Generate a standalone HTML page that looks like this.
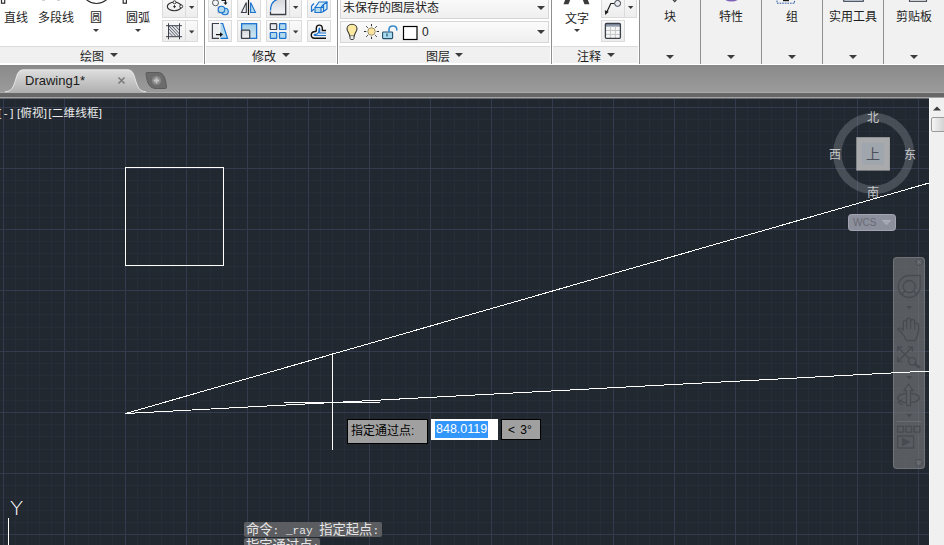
<!DOCTYPE html>
<html lang="zh-CN">
<head>
<meta charset="utf-8">
<title>Drawing1</title>
<style>
html,body{margin:0;padding:0;}
body{width:944px;height:545px;overflow:hidden;position:relative;background:#212830;
  font-family:"Liberation Sans","Noto Sans CJK SC",sans-serif;font-size:12px;color:#1e1e1e;}
.abs{position:absolute;}
/* ---------- ribbon ---------- */
#ribbon{position:absolute;left:0;top:0;width:944px;height:65px;background:#fff;}
.ptitle{position:absolute;top:46px;height:16px;background:#f0f0f0;border-top:1px solid #dcdcdc;}
.vsep{position:absolute;top:0;width:1px;height:64px;background:#8f8f8f;}
.lbl{position:absolute;font-size:12px;line-height:14px;white-space:nowrap;color:#1e1e1e;}
.tri{position:absolute;width:0;height:0;border-left:4px solid transparent;border-right:4px solid transparent;border-top:4px solid #3c3c3c;}
.tris{position:absolute;width:0;height:0;border-left:3px solid transparent;border-right:3px solid transparent;border-top:3px solid #3c3c3c;}
.btn{position:absolute;box-sizing:border-box;border:1px solid #dbdbdb;background:linear-gradient(#fafafa,#ededed);}
.btn.r1{top:-6px;height:24px;}
.btn.r2{top:20px;height:22px;}
.btn i{position:absolute;top:0;bottom:0;width:1px;background:#dbdbdb;}
.btn svg{position:absolute;left:0;top:0;}
.combo{position:absolute;left:340px;width:209px;box-sizing:border-box;border:1px solid #d6d6d6;background:linear-gradient(#fbfbfb,#efefef);}
/* ---------- tab bar ---------- */
#tabbar{position:absolute;left:0;top:65px;width:944px;height:33px;
  background:linear-gradient(#888888 0px,#8c8c8c 3px,#9b9b9b 27px,#a9a9a9 27px,#a9a9a9 28px,#696969 28px,#666666 32px,#a3a3a3 32px,#a3a3a3 33px);}
/* ---------- canvas ---------- */
#canvas{position:absolute;left:0;top:98px;width:929px;height:447px;background-color:#212830;overflow:hidden;}
#vscroll{position:absolute;left:929px;top:98px;width:15px;height:447px;background:#f0f0f0;}
.vp{position:absolute;color:#ececec;font-size:11.6px;line-height:14px;white-space:nowrap;letter-spacing:0.15px;}
.tip{position:absolute;box-sizing:border-box;border:1px solid #000;background:#a0a0a0;color:#000;font-size:12px;line-height:14px;white-space:nowrap;}
.cmp{width:14px;text-align:center;font-size:12px;line-height:14px;color:#c4c6c8;}
.cmd{position:absolute;background:#5b5d60;color:#e6e6e6;border-radius:2px;overflow:visible;}
.ct{position:absolute;left:2px;top:1px;white-space:nowrap;font-family:"Liberation Mono","Noto Sans CJK SC",monospace;font-size:11.1px;line-height:16px;}
.ct b{font-weight:normal;font-size:13.3px;}
</style>
</head>
<body>
<div id="ribbon">
  <!-- collapsed panels background -->
  <div class="abs" style="left:640px;top:0;width:304px;height:64px;background:#f1f1f1;"></div>
  <!-- panel title strips -->
  <div class="ptitle" style="left:0;width:203px;"></div>
  <div class="ptitle" style="left:206px;width:130px;"></div>
  <div class="ptitle" style="left:339px;width:211px;"></div>
  <div class="ptitle" style="left:553px;width:85px;"></div>
  <!-- separators -->
  <div class="vsep" style="left:204px;"></div>
  <div class="vsep" style="left:337px;"></div>
  <div class="vsep" style="left:551px;"></div>
  <div class="vsep" style="left:639px;"></div>
  <div class="vsep" style="left:700px;"></div>
  <div class="vsep" style="left:761px;"></div>
  <div class="vsep" style="left:822px;"></div>
  <div class="vsep" style="left:883px;"></div>


  <!-- big icon remnants at top edge -->
  <svg class="abs" style="left:0;top:0" width="160" height="8" viewBox="0 0 160 8" fill="none">
    <rect x="1.5" y="-2" width="3.2" height="5.200" fill="#fff" stroke="#2e2e2e" stroke-width="1.200"/>
    <circle cx="96.500" cy="-11.500" r="15" stroke="#2e2e2e" stroke-width="1.200"/>
    <rect x="123.200" y="-2" width="3.200" height="5.200" fill="#fff" stroke="#2e2e2e" stroke-width="1.200"/>
    <path d="M42 0.300H45M57 0.300H60" stroke="#c8c8c8" stroke-width="1"/>
  </svg>
  <!-- ellipse / hatch split buttons -->
  <div class="btn r1" style="left:162px;width:36px;"><i style="left:22px"></i>
    <svg width="34" height="22" viewBox="163 -5 34 22" fill="none">
      <ellipse cx="174.300" cy="6.500" rx="7" ry="4.200" stroke="#2e2e2e" stroke-width="1.100"/>
      <circle cx="174.500" cy="2.300" r="1.500" fill="#fff" stroke="#2e2e2e" stroke-width="1"/>
      <circle cx="181.200" cy="6.400" r="1.500" fill="#fff" stroke="#2e2e2e" stroke-width="1"/>
      <path d="M173 6.600H176M174.500 5.100V8.100" stroke="#2e2e2e" stroke-width="0.900"/>
      <path d="M189 6H194.400L191.700 9Z" fill="#3a3a3a"/>
    </svg></div>
  <div class="btn r2" style="left:162px;width:36px;"><i style="left:22px"></i>
    <svg width="34" height="20" viewBox="163 21 34 20" fill="none">
      <rect x="168.500" y="25.700" width="11" height="11" fill="#e2e4e8"/>
      <path d="M169 29L176 36.500M169 26L179 36.500M172 26L179.500 34M175.500 26L179.500 30.500M169 32.500L173 36.500" stroke="#3b404a" stroke-width="0.800"/>
      <path d="M166 25.700H182M166 36.700H182M168.500 23.300V39.300M179.500 23.300V39.300" stroke="#3b404a" stroke-width="1"/>
      <path d="M189 30.500H194.400L191.700 33.500Z" fill="#3a3a3a"/>
    </svg></div>
  <!-- DRAW panel -->
  <div class="lbl" style="left:4px;top:11px;">直线</div>
  <div class="lbl" style="left:38px;top:11px;">多段线</div>
  <div class="lbl" style="left:90px;top:11px;">圆</div>
  <div class="lbl" style="left:126px;top:11px;">圆弧</div>
  <div class="tris" style="left:93px;top:29px;"></div>
  <div class="tris" style="left:135px;top:29px;"></div>
  <div class="lbl" style="left:80px;top:50px;">绘图</div>
  <div class="tri" style="left:110px;top:53px;"></div>


  <!-- copy -->
  <div class="btn r1" style="left:208px;width:24px;">
    <svg width="22" height="22" viewBox="209 -5 22 22" fill="none">
      <rect x="217.500" y="6" width="6" height="7.500" fill="#c6c6c6"/>
      <circle cx="215.500" cy="2.800" r="3" fill="#f4f4f6" stroke="#50545c" stroke-width="1"/>
      <path d="M221.500 0.500H225.500V3" stroke="#1e1e1e" stroke-width="1.200"/><path d="M223.500 2.500H227.500L225.500 5Z" fill="#1e1e1e"/>
      <circle cx="225" cy="11.500" r="3.300" fill="#b3d9ec" stroke="#1b73cf" stroke-width="1.100"/>
      <circle cx="221.500" cy="9.500" r="3.300" fill="#b3d9ec" stroke="#1b73cf" stroke-width="1.100"/>
    </svg></div>
  <!-- stretch -->
  <div class="btn r2" style="left:208px;width:24px;">
    <svg width="22" height="20" viewBox="209 21 22 20" fill="none">
      <path d="M220.500 23.500H222.700L227.500 38.300H220.500Z" fill="#b3d9ec"/>
      <path d="M220.500 23.500H222.700L227.500 38.300H220.500" stroke="#1b73cf" stroke-width="1.200"/>
      <path d="M219 23.500H212.400V38.300H219" stroke="#3b404a" stroke-width="1.200" fill="#eceef0"/>
      <path d="M216 34.600H221" stroke="#111" stroke-width="1.200"/><path d="M220 32.300L223 34.600L220 36.900Z" fill="#111"/>
    </svg></div>
  <!-- mirror -->
  <div class="btn r1" style="left:237px;width:24px;">
    <svg width="22" height="22" viewBox="238 -5 22 22" fill="none">
      <path d="M246.300 2.500V12.500H241.500Z" fill="#f0f0f2" stroke="#3b404a" stroke-width="1.100"/>
      <path d="M250.600 2.500V12.500H255.500Z" fill="#b3d9ec" stroke="#1b73cf" stroke-width="1.100"/>
      <path d="M248.500 -5V15" stroke="#111" stroke-width="1.200"/>
    </svg></div>
  <!-- scale -->
  <div class="btn r2" style="left:237px;width:24px;">
    <svg width="22" height="20" viewBox="238 21 22 20" fill="none">
      <defs><linearGradient id="gb1" x1="0" y1="0" x2="0" y2="1"><stop offset="0" stop-color="#a3d0e6"/><stop offset="1" stop-color="#d2e8f3"/></linearGradient>
      <linearGradient id="gg1" x1="0" y1="0" x2="0" y2="1"><stop offset="0" stop-color="#d4d6da"/><stop offset="1" stop-color="#f4f4f6"/></linearGradient></defs>
      <rect x="241.600" y="23.700" width="15" height="14.600" fill="url(#gb1)" stroke="#1b73cf" stroke-width="1.300"/>
      <rect x="241.500" y="30.200" width="8.200" height="8.200" rx="0.800" fill="url(#gg1)" stroke="#3b404a" stroke-width="1.300"/>
    </svg></div>
  <!-- fillet -->
  <div class="btn r1" style="left:266px;width:36px;"><i style="left:22px"></i>
    <svg width="34" height="22" viewBox="267 -5 34 22" fill="none">
      <path d="M270.500 10.500C270.500 4 274 0 280 -1.500L285.700 -3V14.500H270.500Z" fill="url(#gg2)"/>
      <defs><linearGradient id="gg2" x1="0" y1="0" x2="0" y2="1"><stop offset="0" stop-color="#d0d2d6"/><stop offset="1" stop-color="#f6f6f8"/></linearGradient></defs>
      <path d="M270.500 11.500V14.500H285.700V-5" stroke="#3b404a" stroke-width="1.300"/>
      <path d="M270.500 10.500C270.500 4.500 273.500 0.500 278 -0.800" stroke="#1b73cf" stroke-width="1.300"/>
      <path d="M293 6H298.400L295.700 9Z" fill="#3a3a3a"/>
    </svg></div>
  <!-- array -->
  <div class="btn r2" style="left:266px;width:36px;"><i style="left:22px"></i>
    <svg width="34" height="20" viewBox="267 21 34 20" fill="none">
      <rect x="270.300" y="23.600" width="6.400" height="5.900" rx="0.600" fill="#e8e9ec" stroke="#3b404a" stroke-width="1.200"/>
      <rect x="279.500" y="23.600" width="6.400" height="5.900" rx="0.600" fill="#b3d9ec" stroke="#1b73cf" stroke-width="1.200"/>
      <rect x="270.300" y="32.500" width="6.400" height="5.900" rx="0.600" fill="#b3d9ec" stroke="#1b73cf" stroke-width="1.200"/>
      <rect x="279.500" y="32.500" width="6.400" height="5.900" rx="0.600" fill="#b3d9ec" stroke="#1b73cf" stroke-width="1.200"/>
      <path d="M293 30.500H298.400L295.700 33.500Z" fill="#3a3a3a"/>
    </svg></div>
  <!-- 3d box -->
  <div class="btn r1" style="left:307px;width:24px;">
    <svg width="22" height="22" viewBox="308 -5 22 22" fill="none" stroke="#1b73cf" stroke-width="1.200" stroke-linejoin="round">
      <path d="M315 7.500L319 2H327L323.500 7.500Z" fill="#d4eaf4"/>
      <path d="M315 7.500H321V12.500H315Z" fill="#b3d9ec"/>
      <path d="M323.500 4.500L327 2V9L323.500 11.500Z" fill="#d4eaf4"/>
      <path d="M311.500 6V11.500L314 9" /><path d="M311.500 6L314 3.500"/>
      <path d="M321 7.500L323.500 4.500M321 12.500L323.500 11.500"/>
    </svg></div>
  <!-- offset -->
  <div class="btn r2" style="left:307px;width:24px;">
    <svg width="22" height="20" viewBox="308 21 22 20" fill="none">
      <path d="M326 38.300H314.500C310 38.300 310 31.500 315.500 31.500C316.500 31.500 316.300 30 316.300 28.500C316.300 24 322.300 24 322.300 28.500V30.500H326" stroke="#111" stroke-width="1.400"/>
      <path d="M326 35.500H315.500C313.500 35.500 313.800 34.300 315.500 34.300C318.500 34.300 319 32 319 29.500C319 27.800 319.700 27.800 319.700 29.500V33H326" stroke="#1b73cf" stroke-width="1.200"/>
    </svg></div>
  <!-- MODIFY panel -->
  <div class="lbl" style="left:252px;top:50px;">修改</div>
  <div class="tri" style="left:282px;top:53px;"></div>


  <div class="combo" style="top:-4px;height:23px;"></div>
  <div class="combo" style="top:21px;height:22px;"></div>
  <div class="lbl" style="left:343px;top:1px;color:#222;">未保存的图层状态</div>
  <div class="tri" style="left:537px;top:6px;border-left-width:4.500px;border-right-width:4.500px;"></div>
  <div class="tri" style="left:537px;top:30px;border-left-width:4.500px;border-right-width:4.500px;"></div>
  <svg class="abs" style="left:342px;top:22px" width="90" height="20" viewBox="342 22 90 20" fill="none">
    <path d="M352 24.200C355 24.200 357 26.300 357 28.800C357 31.500 354.500 33 354.300 36H349.700C349.500 33 347 31.500 347 28.800C347 26.300 349 24.200 352 24.200Z" fill="#fbe9a0" stroke="#3a3a3a" stroke-width="1.100"/>
    <path d="M350 36V38.500C350 40 354 40 354 38.500V36" fill="#e8e8e8" stroke="#3a3a3a" stroke-width="1"/>
    <circle cx="371.500" cy="31.500" r="3.700" fill="#fbe5a0" stroke="#8a7a50" stroke-width="0.800"/>
    <path d="M371.500 24V26.300M371.500 36.700V39M364 31.500H366.300M376.700 31.500H379M366.200 26.200L367.800 27.800M375.200 35.200L376.800 36.800M376.800 26.200L375.200 27.800M367.800 35.200L366.200 36.800" stroke="#333" stroke-width="1"/>
    <rect x="382.600" y="32" width="10" height="6.600" rx="0.800" fill="#a9daef" stroke="#24506c" stroke-width="1.100"/>
    <path d="M387 33.500V36.500" stroke="#24506c" stroke-width="1.200"/>
    <path d="M389 32V29.500C389 24.800 396.800 24.800 396.800 29.500V30.500" stroke="#3a8acb" stroke-width="1.600"/>
    <rect x="403.500" y="26.500" width="13.500" height="13" fill="#fff" stroke="#000" stroke-width="1.200"/>
  </svg>
  <div class="lbl" style="left:422px;top:25px;color:#222;">0</div>
  <!-- LAYER panel -->
  <div class="lbl" style="left:426px;top:50px;">图层</div>
  <div class="tri" style="left:455px;top:53px;"></div>


  <svg class="abs" style="left:560px;top:0" width="34" height="6" viewBox="560 0 34 6">
    <path d="M563.500 4.200L565.500 -1H570.500L568.500 4.200Z" fill="#3a3a3a"/><path d="M589.500 4.200L587.500 -1H582.500L584.500 4.200Z" fill="#3a3a3a"/>
  </svg>
  <div class="btn r1" style="left:601px;width:36px;"><i style="left:22px"></i>
    <svg width="34" height="22" viewBox="602 -5 34 22" fill="none">
      <path d="M614.500 3.500H610.800L606.600 12.500" stroke="#1e1e1e" stroke-width="1.200"/>
      <path d="M604.800 10.200L605.200 15L608.800 11.800Z" fill="#1e1e1e"/>
      <circle cx="617.600" cy="3.400" r="3" fill="#e9eaee" stroke="#3a3f4a" stroke-width="1"/>
      <path d="M628 6H633.400L630.700 9Z" fill="#3a3a3a"/>
    </svg></div>
  <div class="btn r2" style="left:601px;width:24px;">
    <svg width="22" height="20" viewBox="602 21 22 20" fill="none">
      <rect x="605.400" y="23.500" width="15" height="14.800" rx="1" fill="#f6f6f6"/>
      <rect x="605.400" y="23.800" width="15" height="2.900" fill="#8f9aad"/>
      <path d="M605.400 30.500H620.400M605.400 34.400H620.400M610.400 26.500V38.300M615.400 26.500V38.300" stroke="#c4c6ca" stroke-width="1"/>
      <rect x="605.400" y="23.500" width="15" height="14.800" rx="1" stroke="#3b404a" stroke-width="1.300"/>
    </svg></div>
  <!-- ANNOTATE panel -->
  <div class="lbl" style="left:565px;top:12px;">文字</div>
  <div class="tris" style="left:574px;top:29px;"></div>
  <div class="lbl" style="left:577px;top:50px;">注释</div>
  <div class="tri" style="left:607px;top:53px;"></div>


  <svg class="abs" style="left:640px;top:0" width="304" height="6" viewBox="640 0 304 6" fill="none">
    <path d="M672.800 -0.500L674.700 1.600L676.600 -0.500" stroke="#3a3a3a" stroke-width="1.200"/>
    <ellipse cx="731.500" cy="-4" rx="8.800" ry="5.600" fill="#7b62b8"/>
    <path d="M777 -2V3.200H794.500V-2" stroke="#2a5aa8" stroke-width="1" stroke-dasharray="1.600 1"/>
    <rect x="783" y="-1" width="6" height="2.200" fill="#1a1a1a"/>
    <rect x="843.700" y="-3" width="19.600" height="4.300" fill="#dde3ea" stroke="#3a4050" stroke-width="1.100"/>
    <rect x="909.500" y="-3" width="17" height="4.300" fill="#fff" stroke="#3a3f48" stroke-width="1.100"/>
  </svg>
  <!-- collapsed panels -->
  <div class="lbl" style="left:664px;top:10px;">块</div>
  <div class="tri" style="left:666px;top:55px;"></div>
  <div class="lbl" style="left:719px;top:10px;">特性</div>
  <div class="tri" style="left:727px;top:55px;"></div>
  <div class="lbl" style="left:786px;top:10px;">组</div>
  <div class="tri" style="left:788px;top:55px;"></div>
  <div class="lbl" style="left:829px;top:10px;">实用工具</div>
  <div class="tri" style="left:849px;top:55px;"></div>
  <div class="lbl" style="left:896px;top:10px;">剪贴板</div>
  <div class="tri" style="left:910px;top:55px;"></div>
</div>

<div id="tabbar">
  <svg class="abs" style="left:0;top:0" width="200" height="33" viewBox="0 0 200 33">
    <defs><linearGradient id="tg" x1="0" y1="0" x2="0" y2="1"><stop offset="0" stop-color="#dedede"/><stop offset="1" stop-color="#aeaeae"/></linearGradient></defs>
    <path d="M5 26.800C12 26.500 13.500 22 16 13.500C18 6.500 19.500 4.800 24 4.800H127C131.500 4.800 133 6.500 135 13.500C137.500 22 139 26.500 146 26.800V28H5Z" fill="url(#tg)"/>
    <path d="M5 26.800C12 26.500 13.500 22 16 13.500C18 6.500 19.500 4.800 24 4.800H127C131.500 4.800 133 6.500 135 13.500C137.500 22 139 26.500 146 26.800" fill="none" stroke="#ececec" stroke-width="0.900"/>
    <path d="M146 8.500C146 8 146.500 7.500 147 7.500H158C162.500 7.500 165.500 11 166.500 22.500C166.500 23 166 23.500 165.500 23.500H156C150.500 23.500 147 19.500 146 8.500Z" fill="#6c6c6c" stroke="#5c5c5c" stroke-width="1"/>
    <circle cx="156.500" cy="15.500" r="4.600" fill="#8a8a8a"/>
    <path d="M153.800 15.500H159.200M156.500 12.800V18.200" stroke="#c4c4c4" stroke-width="1.800"/>
    <path d="M118.500 12.500L124.500 18.500M124.500 12.500L118.500 18.500" stroke="#7b7b7b" stroke-width="1.600"/>
  </svg>
  <div class="abs" style="left:25px;top:8px;font-size:13px;line-height:16px;color:#1a1a1a;white-space:nowrap;">Drawing1*</div>
</div>

<div id="canvas">
<svg class="abs" style="left:0;top:0" width="929" height="447" viewBox="0 0 929 447" shape-rendering="crispEdges" fill="none">
  <path d="M15.5 0V447M27.5 0V447M39.5 0V447M51.5 0V447M76.5 0V447M88.5 0V447M100.5 0V447M112.5 0V447M137.5 0V447M149.5 0V447M161.5 0V447M173.5 0V447M198.5 0V447M210.5 0V447M222.5 0V447M234.5 0V447M259.5 0V447M271.5 0V447M283.5 0V447M295.5 0V447M320.5 0V447M332.5 0V447M344.5 0V447M356.5 0V447M381.5 0V447M393.5 0V447M405.5 0V447M417.5 0V447M442.5 0V447M454.5 0V447M466.5 0V447M478.5 0V447M503.5 0V447M515.5 0V447M527.5 0V447M539.5 0V447M564.5 0V447M576.5 0V447M588.5 0V447M600.5 0V447M625.5 0V447M637.5 0V447M649.5 0V447M661.5 0V447M686.5 0V447M698.5 0V447M710.5 0V447M722.5 0V447M747.5 0V447M759.5 0V447M771.5 0V447M783.5 0V447M808.5 0V447M820.5 0V447M832.5 0V447M844.5 0V447M869.5 0V447M881.5 0V447M893.5 0V447M905.5 0V447M0 21.5H929M0 33.5H929M0 46.5H929M0 58.5H929M0 82.5H929M0 94.5H929M0 107.5H929M0 119.5H929M0 143.5H929M0 155.5H929M0 168.5H929M0 180.5H929M0 204.5H929M0 216.5H929M0 229.5H929M0 241.5H929M0 265.5H929M0 277.5H929M0 290.5H929M0 302.5H929M0 326.5H929M0 338.5H929M0 351.5H929M0 363.5H929M0 387.5H929M0 399.5H929M0 412.5H929M0 424.5H929" stroke="#262d39" stroke-width="1"/>
  <path d="M3.5 0V447M64.5 0V447M125.5 0V447M186.5 0V447M247.5 0V447M308.5 0V447M369.5 0V447M430.5 0V447M491.5 0V447M552.5 0V447M613.5 0V447M674.5 0V447M735.5 0V447M796.5 0V447M857.5 0V447M918.5 0V447M0 9.5H929M0 70.5H929M0 131.5H929M0 192.5H929M0 253.5H929M0 314.5H929M0 375.5H929M0 436.5H929" stroke="#343b4e" stroke-width="1"/>
  <!-- drawn geometry (canvas coords = page y - 98) -->
  <rect x="125.5" y="69.5" width="98" height="98" stroke="#ffffff" stroke-width="1"/>
  <!-- crosshair -->
  <path d="M332.5 255V352M284 304.5H380" stroke="#ffffff" stroke-width="1"/>
  <!-- UCS icon -->
  <path d="M8.5 420V447" stroke="#ffffff" stroke-width="1"/>
</svg>
<div class="vp" style="left:-2px;top:8px;"><span style="letter-spacing:2.6px;">[-]</span><span style="margin-left:0.8px;">[俯视]</span><span style="margin-left:1.2px;">[二维线框]</span></div>
<!-- dynamic input tooltips -->
<svg class="abs" style="left:0;top:0;z-index:5" width="929" height="447" viewBox="0 0 929 447" shape-rendering="crispEdges" fill="none">
  <path d="M125.5 315.5L929 85" stroke="#ffffff" stroke-width="1"/>
  <path d="M125.5 315.5L929 273" stroke="#ffffff" stroke-width="1"/>
</svg>
<div class="tip" style="left:347px;top:321px;width:81px;height:25px;padding:4px 0 0 3px;">指定通过点:</div>
<div class="abs" style="left:431px;top:321px;width:67px;height:21px;background:#fff;box-sizing:border-box;border:1px solid #fff;">
  <span class="abs" style="left:3px;top:1px;height:17px;line-height:17px;font-size:12.5px;background:#3296fa;color:#fff;padding:0 1px;">848.0119</span>
</div>
<div class="tip" style="left:501px;top:321px;width:40px;height:21px;padding:3px 0 0 6px;word-spacing:2px;">&lt; 3&deg;</div>
<!-- command history -->
<div class="cmd" style="left:244px;top:424px;width:138px;height:15px;"><span class="ct"><b>命令</b>: _ray <b>指定起点</b>:</span></div>
<div class="cmd" style="left:244px;top:440px;width:76px;height:15px;"><span class="ct"><b>指定通过点</b>:</span></div>
<!-- UCS Y label -->
<div class="abs" id="ucsy" style="left:10px;top:398.500px;transform:scale(1.2,1.06);transform-origin:0 0;font-family:'DejaVu Sans','Liberation Sans',sans-serif;font-weight:200;font-size:18px;line-height:22px;color:#fff;">Y</div>
<!-- ViewCube compass -->
<svg class="abs" style="left:828px;top:10px" width="92" height="92" viewBox="0 0 92 92">
  <circle cx="45.6" cy="45.6" r="36.3" fill="none" stroke="#8e9298" stroke-opacity="0.36" stroke-width="8.4"/>
  <rect x="28.3" y="29.2" width="33.6" height="33.4" fill="#a9aaac"/>
  <rect x="33.8" y="34.8" width="22.4" height="21.8" fill="#a0a6ad"/>
</svg>
<div class="abs" style="left:864px;top:47px;width:18px;height:18px;line-height:18px;font-size:14px;color:#4c5058;text-align:center;">上</div>
<div class="abs cmp" style="left:866px;top:13px;">北</div>
<div class="abs cmp" style="left:866px;top:88px;">南</div>
<div class="abs cmp" style="left:828px;top:50px;">西</div>
<div class="abs cmp" style="left:903px;top:50px;">东</div>
<!-- WCS -->
<div class="abs" style="left:848px;top:116px;width:48px;height:17px;border-radius:4px;background:rgba(152,154,168,0.9);box-sizing:border-box;border:1px solid rgba(165,167,180,0.9);color:#696b75;font-size:10px;line-height:15px;padding-left:4px;">WCS
  <svg class="abs" style="left:32px;top:4px" width="12" height="8" viewBox="0 0 12 8"><path d="M1.5 1.500H9.500L5.500 5.800Z" fill="#a3a7b1" stroke="#b0b3bd" stroke-width="0.800"/></svg>
</div>
<!-- navigation bar -->
<div class="abs" style="left:893px;top:159px;width:32px;height:212px;border-radius:4px;background:rgba(122,124,126,0.62);box-sizing:border-box;border:1px solid rgba(140,142,146,0.45);"></div>
<svg class="abs" style="left:893px;top:159px" width="32" height="212" viewBox="0 0 32 212" fill="none" stroke="#484b51" stroke-width="1.300" stroke-linecap="round" stroke-linejoin="round">
  <!-- close -->
  <circle cx="26.200" cy="5.200" r="3.600" stroke="#4e5157" stroke-width="1"/><path d="M24.600 3.600L27.800 6.800M27.800 3.600L24.600 6.800" stroke="#72757b" stroke-width="1"/>
  <!-- steering wheel -->
  <path d="M16.200 18.500H27.200V29.500A11 11 0 1 1 16.200 18.500Z"/>
  <circle cx="16.200" cy="29.500" r="6"/>
  <path d="M11.700 34L8.600 37.600M20.700 34L23.800 37.600"/>
  <path d="M13.200 49H19.200L16.200 52.300Z" fill="#484b51" stroke="none"/>
  <!-- pan hand -->
  <path d="M10.800 78.500C8.800 75.500 7 73.500 4.600 72.300C5.600 70.300 8.300 70.800 10.300 73.300V65.300C10.300 62.600 13.600 62.600 13.600 65.300V63.300C13.600 60.400 17.600 60.400 17.600 63.300V64.500C17.600 61.800 21.600 61.800 21.600 64.500V68C21.600 65.500 25.600 65.500 25.600 68V73C25.600 77 24 79.500 22.500 83.500H13.500C12.500 82 11.800 80.300 10.800 78.500Z"/>
  <path d="M13.600 65V71.500M17.600 64V71.500M21.600 66V72"/>
  <!-- zoom extents -->
  <path d="M4.600 90L16 101.500M4.600 90V94M4.600 90H8.600M19.400 90L4.600 104.500M19.400 90V94M19.400 90H15.400M4.600 104.500V100.500M4.600 104.500H8.600"/>
  <circle cx="19.200" cy="104.300" r="3.700"/><path d="M22 107.100L26.300 110.300" stroke-width="2.600"/>
  <path d="M13.200 119H19.200L16.200 122.300Z" fill="#484b51" stroke="none"/>
  <!-- orbit -->
  <ellipse cx="15.500" cy="141" rx="10.800" ry="4.700"/>
  <path d="M13.600 148.500V133.500H11L15.500 127L20 133.500H17.400V148.500Z" fill="#5d6064"/>
  <path d="M8.500 143L5 145.500L9.500 147.500"/>
  <path d="M13.200 157H19.200L16.200 160.300Z" fill="#484b51" stroke="none"/>
  <!-- show motion -->
  <path d="M4 164.500H28" stroke="#6a6d71" stroke-width="1"/>
  <rect x="4.600" y="169.300" width="5.800" height="5.800"/><rect x="12.800" y="169.300" width="5.800" height="5.800"/><rect x="21" y="169.300" width="5.800" height="5.800"/>
  <rect x="4.600" y="179" width="16" height="12"/><path d="M9.500 181.500L16.500 185L9.500 188.500Z" fill="#484b51"/>
  <!-- gear -->
  <circle cx="25.800" cy="205.800" r="3.600" stroke="#4e5157" stroke-width="1"/><path d="M23.800 204.800H27.800M24.600 206.800H27" stroke="#72757b" stroke-width="1"/>
</svg>
</div>
<div class="abs" style="left:0;top:98px;width:944px;height:1px;background:#62666c;"></div>
<div id="vscroll">
  <svg class="abs" style="left:0;top:0" width="15" height="447" viewBox="0 0 15 447">
    <rect x="0" y="0" width="1" height="447" fill="#fafafa"/>
    <path d="M4 12.500L8 8.500L12 12.500Z" fill="#3a3a3a"/>
    <defs><linearGradient id="sg" x1="0" y1="0" x2="1" y2="0"><stop offset="0" stop-color="#f6f6f6"/><stop offset="1" stop-color="#cfcfcf"/></linearGradient></defs>
    <rect x="2.500" y="19.500" width="14" height="14" rx="1.500" fill="url(#sg)" stroke="#9a9a9a"/>
  </svg>
</div>
</body>
</html>
